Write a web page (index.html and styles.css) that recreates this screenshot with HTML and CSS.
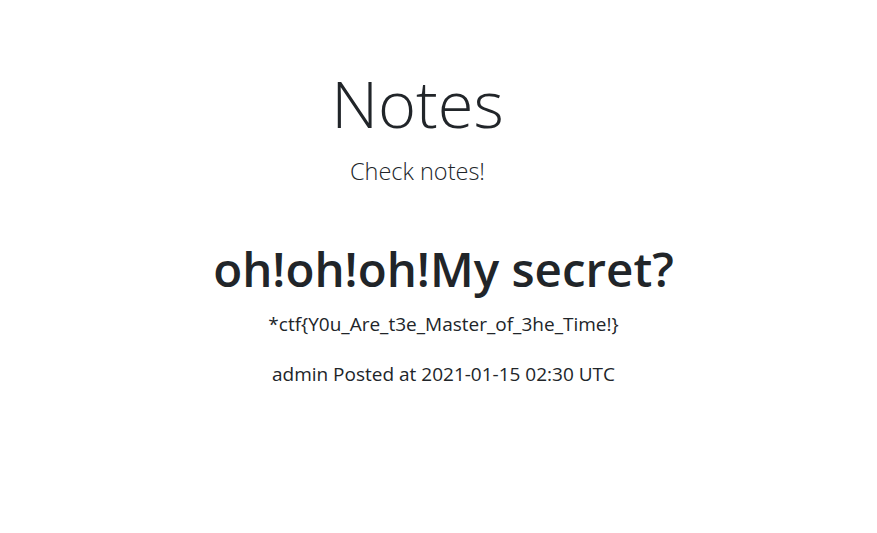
FILE: index.html
```html
<!DOCTYPE html>
<html>
<head>
<meta charset="utf-8">
<link rel="stylesheet" href="styles.css">
</head>
<body>
<div class="page">
  <header class="hero">
    <h1 class="display">Notes</h1>
    <p class="lead">Check notes!</p>
  </header>
  <main class="note">
    <h2 class="note-title">oh!oh!oh!My secret?</h2>
    <p class="note-body">*ctf{Y0u_Are_t3e_Master_of_3he_Time!}</p>
    <p class="note-meta">admin Posted at 2021-01-15 02:30 UTC</p>
  </main>
</div>
</body>
</html>
```
FILE: styles.css
```css
html, body { margin: 0; padding: 0; background: #fff; }
body {
  font-family: "Open Sans", "Noto Sans", sans-serif;
  color: #212529;
}
.page { text-align: center; }
.hero { padding: 64px 0 0 0; margin-right: 42px; }
.display {
  font-size: 65px;
  font-weight: 300;
  line-height: 1.2;
  margin: 0;
}
.lead {
  font-size: 23.5px;
  font-weight: 300;
  margin: 13px 0 0 0;
  color: #212529;
}
.note { padding-top: 53px; margin-left: 10px; }
.note-title {
  font-size: 47.5px;
  font-weight: 600;
  line-height: 1.2;
  margin: 0 0 13px 0;
}
.note-body, .note-meta {
  font-size: 19px;
  margin: 0 0 21px 0;
  line-height: 1.5;
}
```
